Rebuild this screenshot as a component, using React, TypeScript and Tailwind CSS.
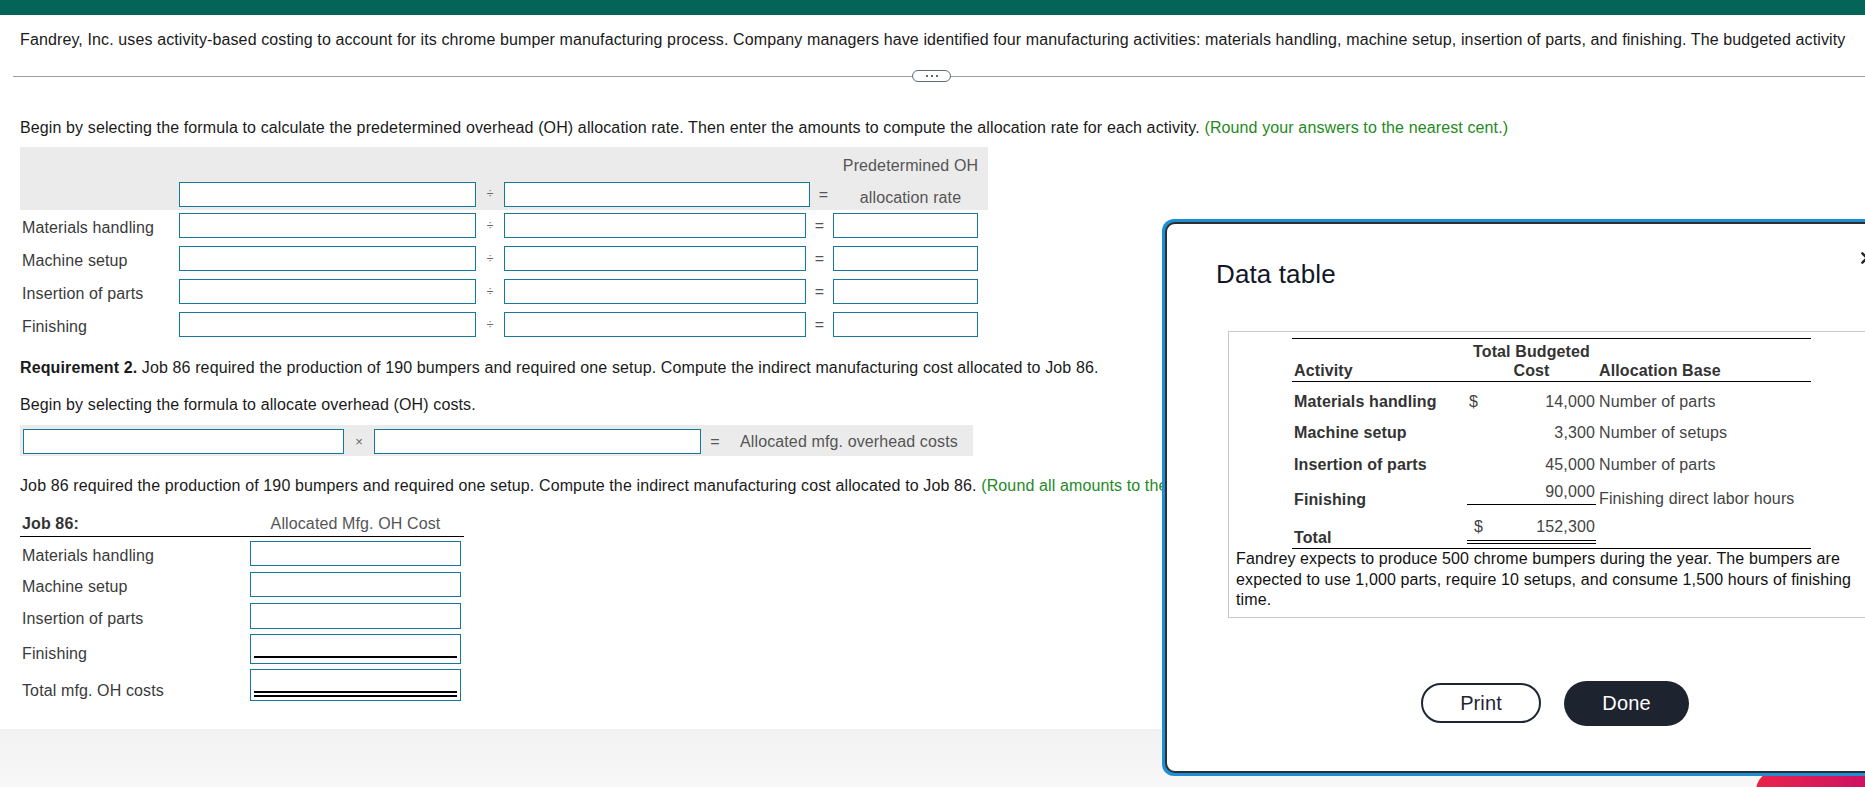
import React from "react";

const inputCls = "border border-[#17789a] bg-white";

function RateRow({ label }: { label: string }) {
  return (
    <div className="grid grid-cols-[159px_297px_28px_302px_27px_155px] h-[25px] items-center">
      <div className="pl-[2px] pt-[4px] text-[#3a3a3a] leading-[20px]">{label}</div>
      <div className={`${inputCls} h-[25px]`} />
      <div className="text-center text-[12px] text-[#666]">÷</div>
      <div className={`${inputCls} h-[25px]`} />
      <div className="text-center text-[#555]">=</div>
      <div className={`${inputCls} h-[25px] w-[145px]`} />
    </div>
  );
}

function JobRow({
  label,
  mt,
  h,
  kind,
}: {
  label: string;
  mt: string;
  h: string;
  kind?: "single" | "double";
}) {
  return (
    <div className={`flex items-end ${mt}`}>
      <div className="w-[230px] pl-[2px] leading-[20px] text-[#3a3a3a]">{label}</div>
      <div className={`${inputCls} w-[211px] ${h} flex flex-col justify-end px-[3px]`}>
        {kind === "single" && <div className="h-[2px] bg-black mb-[5px]" />}
        {kind === "double" && <div className="h-[6px] border-y-2 border-black mb-[3px]" />}
      </div>
    </div>
  );
}

export default function App() {
  return (
    <div className="relative w-[1865px] h-[787px] overflow-hidden bg-white font-['Liberation_Sans',Arial,sans-serif] text-[16px] tracking-[0.12px] text-[#1a1a1a]">
      <div className="h-[15px] bg-[#046458]" />

      <p className="mt-[15px] pl-[20px] leading-[20px] whitespace-nowrap">
        Fandrey, Inc. uses activity-based costing to account for its chrome bumper manufacturing process. Company managers have identified four manufacturing activities: materials handling, machine setup, insertion of parts, and finishing. The budgeted activity
      </p>

      <div className="mt-[20px] ml-[13px] flex items-center h-[12px]">
        <div className="w-[899px] h-px bg-[#9aa0a6]" />
        <div className="w-[39px] h-[12px] rounded-full border border-[#5d6d7c] bg-white flex items-center justify-center gap-[3px]">
          <span className="w-[2px] h-[2px] rounded-full bg-[#333]" />
          <span className="w-[2px] h-[2px] rounded-full bg-[#333]" />
          <span className="w-[2px] h-[2px] rounded-full bg-[#333]" />
        </div>
        <div className="flex-1 h-px bg-[#9aa0a6]" />
      </div>

      <div className="pl-[20px]">
        <p className="mt-[36px] leading-[20px] whitespace-nowrap">
          Begin by selecting the formula to calculate the predetermined overhead (OH) allocation rate. Then enter the amounts to compute the allocation rate for each activity.{" "}
          <span className="text-[#238a23]">(Round your answers to the nearest cent.)</span>
        </p>

        <div className="mt-[9px] w-[968px] bg-[#ebebeb]">
          <div className="grid grid-cols-[159px_297px_28px_302px_27px_155px] h-[35px]">
            <div className="col-span-5" />
            <div className="pt-[9px] text-center leading-[20px] text-[#555]">Predetermined OH</div>
          </div>
          <div className="grid grid-cols-[159px_297px_28px_302px_27px_155px] h-[28px] items-start">
            <div />
            <div className={`${inputCls} h-[25px]`} />
            <div className="text-center text-[12px] text-[#666] leading-[25px]">÷</div>
            <div className={`${inputCls} h-[25px] w-[306px]`} />
            <div className="text-center text-[#555] leading-[25px] pl-[8px]">=</div>
            <div className="text-center text-[#555] leading-[25px] pt-[3px]">allocation rate</div>
          </div>
        </div>

        <div className="pt-[3px] flex flex-col gap-[8px]">
          <RateRow label="Materials handling" />
          <RateRow label="Machine setup" />
          <RateRow label="Insertion of parts" />
          <RateRow label="Finishing" />
        </div>

        <p className="mt-[21px] leading-[20px] whitespace-nowrap">
          <span className="font-bold">Requirement 2.</span> Job 86 required the production of 190 bumpers and required one setup. Compute the indirect manufacturing cost allocated to Job 86.
        </p>
        <p className="mt-[17px] leading-[20px] whitespace-nowrap">
          Begin by selecting the formula to allocate overhead (OH) costs.
        </p>

        <div className="mt-[10px] w-[953px] h-[31px] bg-[#ebebeb] pl-[3px] pt-[4px] flex items-start">
          <div className={`${inputCls} w-[321px] h-[25px]`} />
          <div className="w-[30px] text-center text-[13px] text-[#666] leading-[25px]">×</div>
          <div className={`${inputCls} w-[327px] h-[25px]`} />
          <div className="w-[28px] text-center text-[#555] leading-[25px]">=</div>
          <div className="ml-[11px] text-[#555] leading-[25px] whitespace-nowrap">Allocated mfg. overhead costs</div>
        </div>

        <p className="mt-[20px] leading-[20px] whitespace-nowrap">
          Job 86 required the production of 190 bumpers and required one setup. Compute the indirect manufacturing cost allocated to Job 86.{" "}
          <span className="text-[#238a23]">(Round all amounts to the nearest dollar.)</span>
        </p>

        <div className="mt-[18px] w-[444px]">
          <div className="flex h-[23px] border-b border-black leading-[20px]">
            <div className="w-[230px] pl-[2px] font-bold text-[#333]">Job 86:</div>
            <div className="w-[211px] text-center text-[#555]">Allocated Mfg. OH Cost</div>
          </div>
          <JobRow label="Materials handling" mt="mt-[4px]" h="h-[25px]" />
          <JobRow label="Machine setup" mt="mt-[6px]" h="h-[25px]" />
          <JobRow label="Insertion of parts" mt="mt-[6px]" h="h-[26px]" />
          <JobRow label="Finishing" mt="mt-[5px]" h="h-[30px]" kind="single" />
          <JobRow label="Total mfg. OH costs" mt="mt-[5px]" h="h-[32px]" kind="double" />
        </div>
      </div>

      <div className="mt-[28px] h-[60px] bg-gradient-to-b from-[#f1f1f1] to-[#f8f8f8]" />

      {/* floating pink element partially hidden */}
      <div className="absolute left-[1756px] top-[771px] w-[160px] h-[40px] rounded-[20px] bg-gradient-to-r from-[#e8234a] to-[#c2006c]" />

      {/* Modal */}
      <div className="absolute left-[1162px] top-[219px] w-[786px] h-[557px] rounded-[12px] bg-[#1d8fd6] p-[3px] z-10">
        <div className="h-full rounded-[10px] border-2 border-[#2e2e2e] bg-white flex flex-col">
          <div className="flex items-start">
            <h2 className="pl-[49px] pt-[35px] text-[26px] leading-[30px] text-[#111827]">Data table</h2>
            <div className="ml-auto mr-[68px] mt-[26px] text-[#222]">
              <svg width="16" height="16" viewBox="0 0 24 24" fill="none" stroke="currentColor" strokeWidth="3.5" strokeLinecap="round">
                <path d="M5 5l14 14M19 5L5 19" />
              </svg>
            </div>
          </div>

          <div className="ml-[61px] mt-[42px] w-[646px] border border-[#c8c8c8] pt-[6px] pb-[6px]">
            <div className="ml-[63px] w-[519px] border-t border-b border-black">
              <div className="grid grid-cols-[175px_129px_215px] h-[43px] border-b border-black leading-[19px] font-bold text-[#333]">
                <div className="flex flex-col justify-end pb-[1px] pl-[2px]">Activity</div>
                <div className="flex flex-col justify-end items-center pb-[1px]">
                  <span>Total Budgeted</span>
                  <span>Cost</span>
                </div>
                <div className="flex flex-col justify-end pb-[1px] pl-[3px]">Allocation Base</div>
              </div>

              {[
                { a: "Materials handling", d: "$", n: "14,000", b: "Number of parts", h: "h-[31px]" },
                { a: "Machine setup", d: "", n: "3,300", b: "Number of setups", h: "h-[32px]" },
                { a: "Insertion of parts", d: "", n: "45,000", b: "Number of parts", h: "h-[32px]" },
              ].map((r) => (
                <div key={r.a} className={`grid grid-cols-[175px_129px_215px] ${r.h} pt-[10px] leading-[20px]`}>
                  <div className="pl-[2px] font-bold text-[#333]">{r.a}</div>
                  <div className="flex justify-between pl-[2px] pr-[1px] text-[#444]">
                    <span>{r.d}</span>
                    <span>{r.n}</span>
                  </div>
                  <div className="pl-[3px] text-[#444] whitespace-nowrap">{r.b}</div>
                </div>
              ))}

              <div className="grid grid-cols-[175px_129px_215px] items-start leading-[20px]">
                <div className="mt-[13px] pl-[2px] font-bold text-[#333]">Finishing</div>
                <div className="pt-[5px] pb-[2px] border-b border-black text-right pr-[1px] text-[#444]">90,000</div>
                <div className="mt-[12px] pl-[3px] text-[#444] whitespace-nowrap">Finishing direct labor hours</div>
              </div>

              <div className="grid grid-cols-[175px_129px_215px] items-start leading-[20px]">
                <div className="mt-[18px] pl-[2px] font-bold text-[#333]">Total</div>
                <div className="pt-[7px] pb-[3px] border-b-[4px] border-double border-black flex justify-between pl-[7px] pr-[1px] text-[#444]">
                  <span>$</span>
                  <span>152,300</span>
                </div>
                <div />
              </div>
            </div>

            <p className="pl-[7px] w-[632px] leading-[20.5px] text-[#111]">
              Fandrey expects to produce 500 chrome bumpers during the year. The bumpers are expected to use 1,000 parts, require 10 setups, and consume 1,500 hours of finishing time.
            </p>
          </div>

          <div className="mt-[63px] flex justify-center items-center gap-[23px]">
            <button className="w-[120px] h-[40px] rounded-full border-2 border-[#1f2533] bg-white text-[20px] text-[#1f2533]">
              Print
            </button>
            <button className="w-[125px] h-[45px] rounded-full bg-[#1e2330] text-[20px] text-white">
              Done
            </button>
          </div>
        </div>
      </div>
    </div>
  );
}
